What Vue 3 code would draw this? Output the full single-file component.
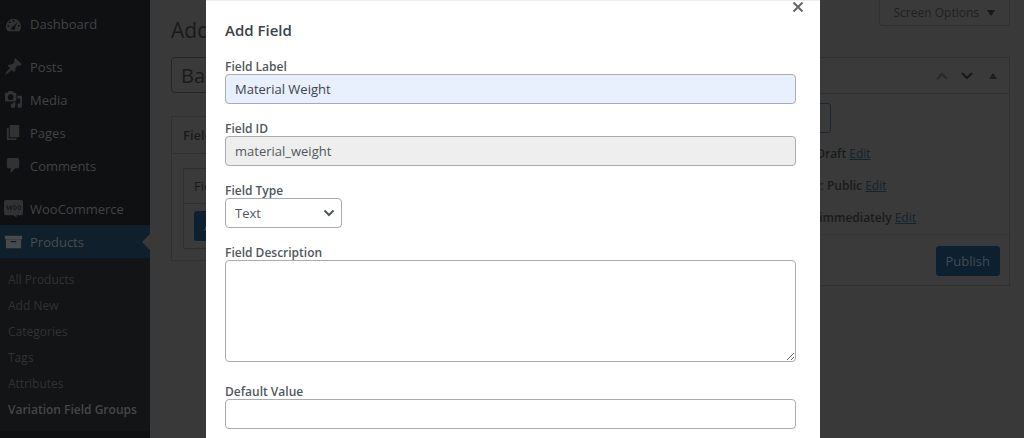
<script setup>
import { ref } from 'vue'

const groups = [
  [{ name: 'Dashboard', icon: 'dashboard' }],
  [
    { name: 'Posts', icon: 'pin' },
    { name: 'Media', icon: 'media' },
    { name: 'Pages', icon: 'pages' },
    { name: 'Comments', icon: 'comment' },
  ],
  [
    { name: 'WooCommerce', icon: 'woo' },
    { name: 'Products', icon: 'archive', active: true },
  ],
]
const submenu = ['All Products', 'Add New', 'Categories', 'Tags', 'Attributes', 'Variation Field Groups']
const status = [
  { label: 'Status:', value: 'Draft' },
  { label: 'Visibility:', value: 'Public' },
  { label: 'Publish', value: 'immediately' },
]

const groupTitle = ref('Back')
const fieldLabel = ref('Material Weight')
const fieldId = ref('material_weight')
const fieldType = ref('Text')
const description = ref('')
const defaultValue = ref('')
</script>

<template>
  <div class="admin">
    <nav class="sidebar">
      <ul v-for="(group, i) in groups" :key="i" class="menu">
        <li v-for="item in group" :key="item.name">
          <a href="#" class="menu-item" :class="{ active: item.active }">
            <svg class="icon" viewBox="0 0 20 20" aria-hidden="true">
              <path v-if="item.icon === 'dashboard'" fill-rule="evenodd" d="M3.8 17h12.4c1.1-1.3 1.8-3 1.8-5a8 8 0 1 0-16 0c0 2 .7 3.700 1.800 5zM10 5a1 1 0 1 1 0 2 1 1 0 0 1 0-2zM6 6.500a1 1 0 1 1 0 2 1 1 0 0 1 0-2zm8.500.2L11.600 13a2 2 0 1 1-1.600-1.200zM4.500 10.500a1 1 0 1 1 0 2 1 1 0 0 1 0-2zm11 0a1 1 0 1 1 0 2 1 1 0 0 1 0-2z" />
              <path v-else-if="item.icon === 'pin'" d="M10.440 3.020l1.820-1.820 6.360 6.350-1.830 1.820c-1.050-.68-2.480-.57-3.410.36l-.75.75c-.92.93-1.040 2.350-.35 3.410l-1.830 1.820-2.410-2.410-2.800 2.790c-.42.42-3.380 2.710-3.800 2.290s1.860-3.390 2.280-3.810l2.790-2.790L4.100 9.360l1.830-1.820c1.050.69 2.480.57 3.400-.36l.75-.75c.93-.92 1.050-2.350.36-3.410z" />
              <path v-else-if="item.icon === 'media'" fill-rule="evenodd" d="M13 11V4c0-.55-.45-1-1-1h-1.670L9 1H5L3.670 3H2c-.55 0-1 .45-1 1v7c0 .55.45 1 1 1h10c.55 0 1-.45 1-1zM7 4.500a3 3 0 1 1 0 6 3 3 0 0 1 0-6zM14 6h5v10.500A2.500 2.500 0 1 1 16.500 14l.5.050V9h-3zm-4 8.050V13h2v3.500a2.500 2.500 0 1 1-2-2.450z" />
              <path v-else-if="item.icon === 'pages'" d="M6 15V2h10v13H6zm-1 1h8v2H3V5h2v11z" />
              <path v-else-if="item.icon === 'comment'" d="M5 2h9c1.100 0 2 .9 2 2v7c0 1.100-.9 2-2 2h-2l-5 5v-5H5c-1.100 0-2-.9-2-2V4c0-1.100.9-2 2-2z" />
              <g v-else-if="item.icon === 'woo'">
                <path d="M2 1h16a2 2 0 0 1 2 2v12a2 2 0 0 1-2 2h-5l.5 2.500L9.500 17H2a2 2 0 0 1-2-2V3a2 2 0 0 1 2-2z" />
                <path class="woo-mark" d="M3 6.500l1.200 5 2.200-4 .8 4 1.600-5M11.400 6.800c-1.600 0-2 4.600 0 4.600s2-4.600 0-4.600zm4.700 0c-1.600 0-2 4.600 0 4.600s2-4.600 0-4.600z" />
              </g>
              <path v-else fill-rule="evenodd" d="M1 4h18v3.500H1zM2 8h16v9H2zm5 1.500h6v1.200H7z" />
            </svg>
            {{ item.name }}
          </a>
        </li>
      </ul>
      <ul class="submenu">
        <li v-for="(s, i) in submenu" :key="s">
          <a href="#" :class="{ current: i === submenu.length - 1 }">{{ s }}</a>
        </li>
      </ul>
    </nav>

    <main class="content">
      <header class="top">
        <h1>Add</h1>
        <button type="button" class="screen-options">Screen Options <span class="tri down"></span></button>
      </header>
      <div class="columns">
        <section class="primary">
          <input v-model="groupTitle" class="title-input" type="text" aria-label="Group title" />
          <div class="card fields">
            <h2>Fields</h2>
            <div class="fields-body">
              <div class="inner">
                <div class="inner-head">Field</div>
                <div class="inner-body"><button type="button" class="primary-btn">Add</button></div>
              </div>
            </div>
          </div>
        </section>
        <aside class="card publish">
          <div class="publish-head">
            <button type="button" aria-label="Move up"><svg viewBox="0 0 14 10"><path class="faint" d="M2 8l5-5 5 5" /></svg></button>
            <button type="button" aria-label="Move down"><svg viewBox="0 0 14 10"><path d="M2 2l5 5 5-5" /></svg></button>
            <button type="button" aria-label="Toggle panel"><span class="tri up"></span></button>
          </div>
          <div class="publish-body">
            <button type="button" class="save">Save Draft</button>
            <p v-for="row in status" :key="row.label">
              {{ row.label }} <b>{{ row.value }}</b> <a href="#">Edit</a>
            </p>
          </div>
          <div class="publish-foot"><button type="button" class="primary-btn">Publish</button></div>
        </aside>
      </div>
    </main>

    <div class="overlay">
      <form class="modal" role="dialog" aria-labelledby="modal-title" @submit.prevent>
        <button type="button" class="close" aria-label="Close">
          <svg viewBox="0 0 12 12"><path d="M1.500 1.500l9 9M10.500 1.500l-9 9" /></svg>
        </button>
        <h2 id="modal-title">Add Field</h2>
        <div class="field">
          <label for="f-label">Field Label</label>
          <input id="f-label" v-model="fieldLabel" class="filled" type="text" />
        </div>
        <div class="field">
          <label for="f-id">Field ID</label>
          <input id="f-id" v-model="fieldId" type="text" readonly />
        </div>
        <div class="field">
          <label for="f-type">Field Type</label>
          <div class="select">
            <select id="f-type" v-model="fieldType"><option>Text</option></select>
            <svg viewBox="0 0 12 8" aria-hidden="true"><path d="M1.500 1.500L6 6l4.500-4.500" /></svg>
          </div>
        </div>
        <div class="field">
          <label for="f-desc">Field Description</label>
          <textarea id="f-desc" v-model="description"></textarea>
        </div>
        <div class="field">
          <label for="f-default">Default Value</label>
          <input id="f-default" v-model="defaultValue" type="text" />
        </div>
      </form>
    </div>
  </div>
</template>

<style>
body {
  background: #393939;
  overflow: hidden;
}
</style>

<style scoped>
.admin,
.admin * {
  box-sizing: border-box;
}
.admin {
  display: flex;
  min-height: 100vh;
  font-family: 'Open Sans', 'Noto Sans', sans-serif;
  font-size: 12px;
  color: #191a1b;
}
h1,
h2,
p,
ul {
  margin: 0;
  padding: 0;
  font-weight: 400;
}
ul {
  list-style: none;
}
button,
input,
select,
textarea {
  font: inherit;
  color: inherit;
}
button {
  border: 0;
  padding: 0;
  background: none;
}

.sidebar {
  flex: none;
  width: 150px;
  padding-top: 8px;
  background: #0f1012;
}
.menu + .menu {
  margin-top: 10px;
}
.menu-item {
  position: relative;
  display: flex;
  align-items: center;
  gap: 7px;
  height: 33px;
  padding-left: 4px;
  font-size: 13px;
  color: #424344;
  text-decoration: none;
}
.menu:first-child .menu-item {
  height: 32px;
}
.icon {
  width: 19px;
  height: 19px;
  fill: #303234;
}
.woo-mark {
  fill: none;
  stroke: #151617;
  stroke-width: 1;
}
.active {
  background: #0f1f2c;
  color: #484b4e;
}
.active .icon {
  fill: #484b4e;
}
.active::after {
  content: '';
  position: absolute;
  right: 0;
  top: 9px;
  border: 8px solid transparent;
  border-left: 0;
  border-right-color: #393939;
}
.submenu {
  padding: 9px 0 8px;
  background: #131415;
}
.submenu a {
  display: block;
  padding-left: 8px;
  line-height: 26px;
  color: #303234;
  text-decoration: none;
}
.submenu .current {
  font-weight: 600;
  color: #464748;
}

.content {
  flex: 1;
  min-width: 0;
  padding: 0 14px 0 21px;
}
.top {
  display: flex;
  justify-content: space-between;
  align-items: flex-start;
  height: 57px;
}
h1 {
  padding-top: 15px;
  font-size: 21px;
  line-height: 30px;
}
.screen-options {
  display: flex;
  align-items: center;
  gap: 8px;
  height: 26px;
  padding: 0 14px;
  border: 1px solid #303031;
  border-top: 0;
  border-radius: 0 0 4px 4px;
  background: #3a3a3a;
  color: #1f2021;
}
.tri {
  display: block;
  border: 4px solid transparent;
}
.tri.down {
  border-top: 6px solid #171819;
  border-bottom: 0;
}
.tri.up {
  border-bottom: 6px solid #1d1e1f;
  border-top: 0;
}
.columns {
  display: flex;
  align-items: flex-start;
  gap: 20px;
}
.primary {
  flex: 1;
}
.title-input {
  display: block;
  width: 100%;
  height: 36px;
  padding: 0 9px;
  border: 1px solid #242526;
  border-radius: 4px;
  background: #3a3a3a;
  font-size: 20px;
}
.card {
  border: 1px solid #303031;
  background: #3a3a3a;
}
.fields {
  margin-top: 23px;
}
.fields h2 {
  padding-left: 11px;
  border-bottom: 1px solid #303031;
  font-size: 13px;
  font-weight: 600;
  line-height: 36px;
}
.fields-body {
  padding: 14px 11px 11px;
}
.inner {
  border: 1px solid #303031;
}
.inner-head {
  padding-left: 10px;
  border-bottom: 1px solid #303031;
  font-size: 13px;
  line-height: 34px;
}
.inner-body {
  padding: 7px 10px;
}
.primary-btn {
  display: block;
  height: 30px;
  padding: 0 10px;
  border-radius: 3px;
  background: #0d202f;
  font-size: 13px;
  color: #424b52;
}
.publish {
  flex: none;
  width: 272px;
}
.publish-head {
  display: flex;
  justify-content: flex-end;
  align-items: center;
  height: 36px;
  padding-right: 12px;
  border-bottom: 1px solid #303031;
}
.publish-head button {
  display: flex;
  margin-left: 11px;
}
.publish-head button:last-child {
  margin-left: 15px;
}
.publish-head svg {
  width: 14px;
  height: 10px;
  fill: none;
  stroke: #171819;
  stroke-width: 2;
}
.publish-head .faint {
  stroke: #282929;
}
.publish-body {
  padding: 9px 10px 0;
}
.save {
  display: block;
  height: 30px;
  padding: 0 11px;
  border: 1px solid #1c2733;
  border-radius: 3px;
}
.publish-body p {
  padding-left: 26px;
  line-height: 32px;
}
.publish-body .save + p {
  margin-top: 5px;
}
.publish-body b {
  font-weight: 600;
}
.publish-body a {
  color: #132431;
}
.publish-foot {
  display: flex;
  justify-content: flex-end;
  padding: 11px 9px 9px;
  border-top: 1px solid #353535;
}

.overlay {
  position: fixed;
  inset: 0;
  display: flex;
  padding: 0 204px 0 206px;
  overflow: hidden;
}
.modal {
  position: relative;
  flex: 1;
  align-self: flex-start;
  min-height: 100%;
  padding: 18px 24px 24px 19px;
  border-top: 1px solid #eee;
  background: #fff;
  color: #3c434a;
}
.modal h2 {
  margin-bottom: 19px;
  font-size: 15px;
  font-weight: 600;
  line-height: 22px;
}
.close {
  position: absolute;
  top: 0;
  right: 16px;
  display: flex;
}
.close svg {
  width: 12px;
  height: 12px;
  fill: none;
  stroke: #666;
  stroke-width: 2;
}
.field {
  margin-bottom: 18px;
}
.field label {
  display: block;
  font-size: 12px;
  font-weight: 600;
  line-height: 14px;
  color: #50575e;
}
.field input,
.field textarea,
.field select {
  display: block;
  width: 100%;
  height: 30px;
  padding: 0 9px;
  border: 1px solid #a9abae;
  border-radius: 4px;
  background: #fff;
  font-size: 13px;
  outline: 0;
}
.field .filled {
  background: #e8f0fe;
}
.field input[readonly] {
  background: #eee;
  color: #50575e;
}
.field textarea {
  height: 102px;
  margin-bottom: 23px;
  resize: vertical;
}
.select {
  position: relative;
  width: 117px;
}
.field select {
  appearance: none;
  color: #50575e;
}
.select svg {
  position: absolute;
  right: 7px;
  top: 11px;
  width: 12px;
  height: 8px;
  fill: none;
  stroke: #50575e;
  stroke-width: 2;
  pointer-events: none;
}
</style>
